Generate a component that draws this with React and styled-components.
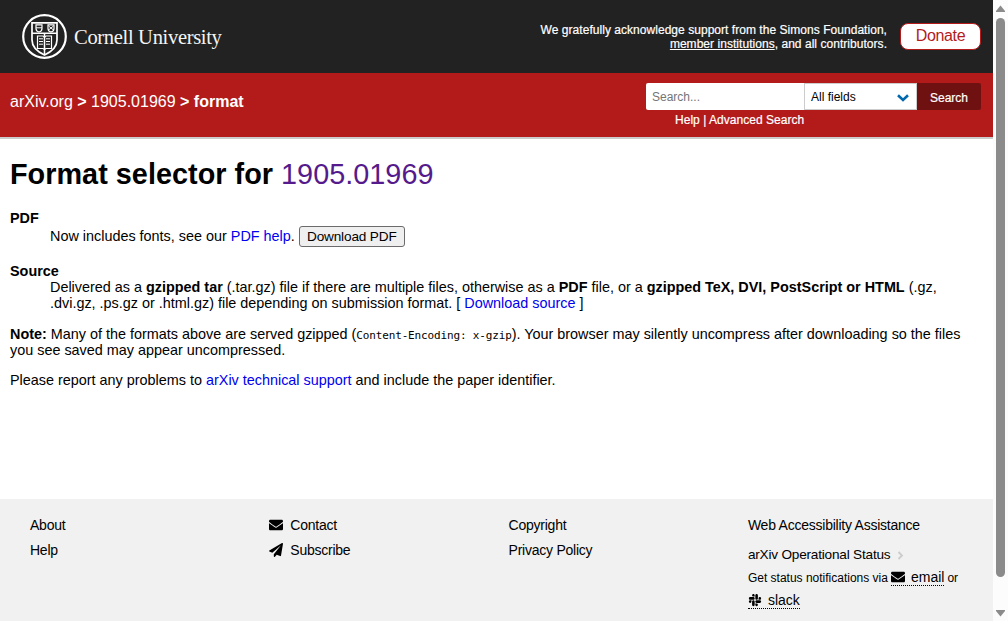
import React from "react";
import styled, { createGlobalStyle } from "styled-components";
import { FaEnvelope, FaPaperPlane, FaSlack } from "react-icons/fa";

const Global = createGlobalStyle`
  * { box-sizing: border-box; }
  body {
    margin: 0;
    background: #fff;
    color: #000;
    font: 14.4px/16px "Liberation Sans", Arial, sans-serif;
    overflow: hidden;
  }
`;

const Window = styled.div`
  display: grid;
  grid-template-columns: 993px 15px;
  height: 621px;
`;
const Page = styled.div`
  display: flex;
  flex-direction: column;
  min-width: 0;
  overflow: hidden;
`;
const Scrollbar = styled.div`
  display: flex;
  flex-direction: column;
  align-items: center;
  background: #fcfcfc;
  padding: 5px 0 4px 0;
`;
const Arrow = styled.svg`
  width: 9px;
  height: 8px;
  fill: #8b8b8b;
  flex: none;
`;
const Thumb = styled.div`
  width: 9px;
  height: 559px;
  margin: 5px 0 auto;
  border-radius: 5px;
  background: #8b8b8b;
`;

const Banner = styled.header`
  display: flex;
  align-items: center;
  height: 73px;
  flex: none;
  padding: 0 12px 0 22px;
  background: #222;
  color: #fff;
`;
const Seal = styled.svg`
  width: 45px;
  height: 45px;
  flex: none;
`;
const Wordmark = styled.span`
  margin: 1px auto 0 7px;
  font: 20.6px/24px "Palatino Linotype", Palatino, "Liberation Serif", serif;
  letter-spacing: -0.35px;
  color: #f4f4f4;
  white-space: nowrap;
`;
const Support = styled.p`
  margin: 0 13px 0 0;
  font-size: 12px;
  line-height: 14px;
  letter-spacing: 0.04px;
  text-align: right;
  -webkit-text-stroke: 0.2px;
`;
const Donate = styled.a`
  width: 81px;
  height: 27px;
  border: 1px solid #b31b1b;
  border-radius: 8px;
  background: #fff;
  color: #b31b1b;
  font-size: 16px;
  letter-spacing: -0.35px;
  line-height: 24px;
  text-align: center;
`;

const RedBar = styled.div`
  display: flex;
  justify-content: space-between;
  flex: none;
  height: 66px;
  padding: 10px 12px 0 10px;
  border-bottom: 2px solid #ccc;
  background: #b31b1b;
  color: #fff;
`;
const Crumbs = styled.div`
  margin-top: 9px;
  font-size: 16px;
  line-height: 20px;
  white-space: nowrap;
`;
const SearchBlock = styled.div`
  width: 335px;
  font-size: 12px;
`;
const SearchRow = styled.div`
  display: flex;
  height: 27px;
  line-height: 27px;
`;
const SearchInput = styled.div`
  width: 158px;
  padding: 1px 6px 0;
  border-radius: 2px 0 0 2px;
  background: #fff;
  color: #757575;
`;
const FieldSelect = styled.div`
  display: flex;
  align-items: center;
  justify-content: space-between;
  width: 113px;
  padding: 2px 7px 0 6px;
  border: 1px solid #ccc;
  background: #fff;
  color: #000;
`;
const SearchButton = styled.div`
  width: 64px;
  padding-top: 2px;
  border-radius: 0 2px 2px 0;
  background: #701111;
  text-align: center;
  -webkit-text-stroke: 0.2px;
`;
const SearchLinks = styled.div`
  padding: 3px 0 0 29px;
  line-height: 14px;
  letter-spacing: 0.03px;
  -webkit-text-stroke: 0.2px;
`;

const Content = styled.main`
  flex: 1;
  padding: 18px 10px 0;
`;
const Title = styled.h1`
  margin: 0 0 19px;
  font-size: 28.8px;
  line-height: 34px;
  letter-spacing: 0.03px;
  white-space: nowrap;
`;
const Link = styled.a`
  color: ${(p) => (p.$visited ? "#551a8b" : "#0000ee")};
  font-weight: normal;
`;
const Term = styled.dt`
  font-weight: bold;
  line-height: 16px;
`;
const Detail = styled.dd`
  margin: ${(p) => (p.$spaced ? "0 0 16px 40px" : "0 0 0 40px")};
`;
const List = styled.dl`
  margin: 0 0 15px;
`;
const Line = styled.div`
  white-space: nowrap;
  height: ${(p) => p.$h || 16}px;
  line-height: ${(p) => p.$h || 16}px;
`;
const Note = styled.div`
  margin-bottom: 14px;
`;
const Code = styled.code`
  font-family: Consolas, "DejaVu Sans Mono", monospace;
  font-size: 11px;
  letter-spacing: -0.15px;
`;
const DownloadButton = styled.button`
  width: 106px;
  height: 21px;
  padding: 0;
  border: 1px solid #6b6b6b;
  border-radius: 3px;
  background: #efefef;
  color: #000;
  font: 13.6px/17px "Liberation Sans", Arial, sans-serif;
  letter-spacing: -0.15px;
`;

const Footer = styled.footer`
  display: grid;
  grid-template-columns: 239.3px 239.3px 239.3px 1fr;
  flex: none;
  height: 122px;
  padding: 13px 0 0 30px;
  background: #f1f1f1;
  font-size: 14px;
`;
const FooterItem = styled.div`
  display: flex;
  align-items: center;
  gap: 7px;
  height: 25px;
  letter-spacing: -0.24px;
  white-space: nowrap;
`;
const Status = styled.div`
  display: flex;
  align-items: center;
  gap: 7px;
  height: 16px;
  margin-top: 10px;
  font-size: 13.6px;
  letter-spacing: -0.2px;
  white-space: nowrap;
`;
const Notify = styled.div`
  display: flex;
  align-items: center;
  gap: 3px;
  height: 23px;
  font-size: 12px;
  white-space: nowrap;
`;
const Notifications = styled.div`
  margin-top: 3px;
`;
const DottedLink = styled.a`
  display: inline-flex;
  align-items: center;
  gap: 6px;
  height: 17px;
  border-bottom: 1px dotted #000;
  font-size: 14px;
`;

function CornellSeal() {
  return (
    <Seal viewBox="0 0 45 45" fill="none" stroke="#fff">
      <circle cx="22.5" cy="22.5" r="21.3" strokeWidth="2.2" />
      <path d="M10 8.9H35V26C35 33 30 37.5 22.5 41C15 37.5 10 33 10 26Z" strokeWidth="1.7" />
      <path d="M10 19.2H35M22.5 19.2V40" strokeWidth="1.5" />
      <path d="M14 10.8H20V14.5Q20 17.3 17 18Q14 17.3 14 14.5ZM26 10.8H32V14.5Q32 17.3 29 18Q26 17.3 26 14.5Z" strokeWidth="1.2" />
      <path d="M14 13.8H20M26.5 12L29 14L31.5 12M26.5 16L29 14L31.5 16" strokeWidth="1" />
      <path d="M15.5 22H21L22.5 23.2L24 22H29.5V34.5H24L22.5 35.6L21 34.5H15.5Z" strokeWidth="1.2" />
      <path d="M17 24.8H21M17 27.5H21M17 30.2H21M24 24.8H28M24 27.5H28M24 30.2H28" strokeWidth="1" />
    </Seal>
  );
}

export default function App() {
  return (
    <Window>
      <Global />
      <Page>
        <Banner>
          <CornellSeal />
          <Wordmark>Cornell University</Wordmark>
          <Support>
            We gratefully acknowledge support from the Simons Foundation,
            <br />
            <u>member institutions</u>, and all contributors.
          </Support>
          <Donate>Donate</Donate>
        </Banner>
        <RedBar>
          <Crumbs>
            arXiv.org <b>&gt;</b> 1905.01969 <b>&gt; format</b>
          </Crumbs>
          <SearchBlock>
            <SearchRow>
              <SearchInput>Search...</SearchInput>
              <FieldSelect>
                All fields
                <svg width="12" height="8" viewBox="0 0 12 8" fill="none" stroke="#0068ac" strokeWidth="2.6">
                  <path d="M1 1.3L6 6L11 1.3" />
                </svg>
              </FieldSelect>
              <SearchButton>Search</SearchButton>
            </SearchRow>
            <SearchLinks>Help | Advanced Search</SearchLinks>
          </SearchBlock>
        </RedBar>
        <Content>
          <Title>
            Format selector for <Link $visited>1905.01969</Link>
          </Title>
          <List>
            <Term>PDF</Term>
            <Detail $spaced>
              <Line $h={21}>
                Now includes fonts, see our <Link>PDF help</Link>. <DownloadButton>Download PDF</DownloadButton>
              </Line>
            </Detail>
            <Term>Source</Term>
            <Detail>
              <Line>
                Delivered as a <b>gzipped tar</b> (.tar.gz) file if there are multiple files, otherwise as a <b>PDF</b>{" "}
                file, or a <b>gzipped TeX, DVI, PostScript or HTML</b> (.gz,
              </Line>
              <Line>
                .dvi.gz, .ps.gz or .html.gz) file depending on submission format. [ <Link>Download source</Link> ]
              </Line>
            </Detail>
          </List>
          <Note>
            <Line>
              <b>Note:</b> Many of the formats above are served gzipped (<Code>Content-Encoding: x-gzip</Code>). Your
              browser may silently uncompress after downloading so the files
            </Line>
            <Line>you see saved may appear uncompressed.</Line>
          </Note>
          <Line>
            Please report any problems to <Link>arXiv technical support</Link> and include the paper identifier.
          </Line>
        </Content>
        <Footer>
          <div>
            <FooterItem>About</FooterItem>
            <FooterItem>Help</FooterItem>
          </div>
          <div>
            <FooterItem>
              <FaEnvelope size={14} /> Contact
            </FooterItem>
            <FooterItem>
              <FaPaperPlane size={14} /> Subscribe
            </FooterItem>
          </div>
          <div>
            <FooterItem>Copyright</FooterItem>
            <FooterItem>Privacy Policy</FooterItem>
          </div>
          <div>
            <FooterItem>Web Accessibility Assistance</FooterItem>
            <Status>
              arXiv Operational Status
              <svg width="7" height="9" viewBox="0 0 7 9" fill="none" stroke="#ccc" strokeWidth="1.8">
                <path d="M1.5 1L5 4.5L1.5 8" />
              </svg>
            </Status>
            <Notifications>
              <Notify>
                Get status notifications via
                <DottedLink>
                  <FaEnvelope size={14} /> email
                </DottedLink>
                or
              </Notify>
              <Notify>
                <DottedLink>
                  <FaSlack size={14} /> slack
                </DottedLink>
              </Notify>
            </Notifications>
          </div>
        </Footer>
      </Page>
      <Scrollbar>
        <Arrow viewBox="0 0 9 8">
          <path d="M4.5 0.5L9 6V7H0V6Z" />
        </Arrow>
        <Thumb />
        <Arrow viewBox="0 0 9 8">
          <path d="M4.5 7.5L9 2V1H0V2Z" />
        </Arrow>
      </Scrollbar>
    </Window>
  );
}
